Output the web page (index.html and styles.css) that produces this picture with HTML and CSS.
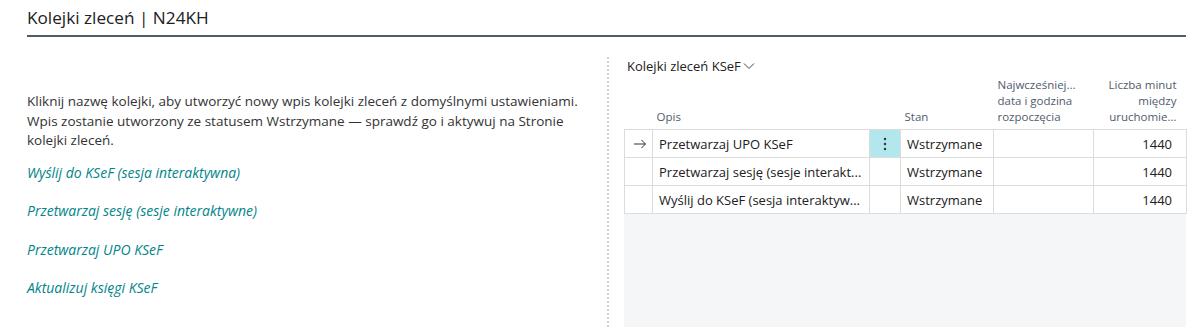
FILE: index.html
```html
<!DOCTYPE html>
<html>
<head>
  <meta charset="UTF-8" />
  <title>Kolejki zleceń | N24KH</title>
  <link rel="stylesheet" href="styles.css">
</head>
<body>
  <div class="header">
    <h1 class="page-title">Kolejki zleceń | N24KH</h1>
  </div>
  <div class="content">
    <div class="left-pane">
      <p class="intro">Kliknij nazwę kolejki, aby utworzyć nowy wpis kolejki zleceń z domyślnymi ustawieniami. Wpis zostanie utworzony ze statusem Wstrzymane — sprawdź go i aktywuj na Stronie kolejki zleceń.</p>
      <ul class="queue-links">
        <li><a href="#">Wyślij do KSeF (sesja interaktywna)</a></li>
        <li><a href="#">Przetwarzaj sesję (sesje interaktywne)</a></li>
        <li><a href="#">Przetwarzaj UPO KSeF</a></li>
        <li><a href="#">Aktualizuj księgi KSeF</a></li>
      </ul>
    </div>
    <div class="divider"></div>
    <div class="right-pane">
      <div class="part-title">Kolejki zleceń KSeF<svg class="chevron" width="12" height="8" viewBox="0 0 12 8"><path d="M1 1.5 L6 6.5 L11 1.5" fill="none" stroke="#444" stroke-width="1"/></svg></div>
      <div class="grid-wrap">
        <table class="grid">
          <colgroup>
            <col style="width:28px">
            <col style="width:217px">
            <col style="width:31px">
            <col style="width:93px">
            <col style="width:100px">
            <col style="width:93px">
          </colgroup>
          <thead>
            <tr>
              <th></th>
              <th>Opis</th>
              <th></th>
              <th>Stan</th>
              <th>Najwcześniej...<br>data i godzina<br>rozpoczęcia</th>
              <th class="num">Liczba minut<br>między<br>uruchomie...</th>
            </tr>
          </thead>
          <tbody>
            <tr>
              <td class="marker">
                <svg width="14" height="10" viewBox="0 0 14 10"><path d="M1 5 H12.5 M8.5 1 L12.5 5 L8.5 9" fill="none" stroke="#333" stroke-width="1"/></svg>
              </td>
              <td>Przetwarzaj UPO KSeF</td>
              <td class="dots active">
                <svg width="4" height="14" viewBox="0 0 4 14"><circle cx="2" cy="2" r="1.2" fill="#333"/><circle cx="2" cy="7" r="1.2" fill="#333"/><circle cx="2" cy="12" r="1.2" fill="#333"/></svg>
              </td>
              <td>Wstrzymane</td>
              <td></td>
              <td class="num">1440</td>
            </tr>
            <tr>
              <td class="marker"></td>
              <td>Przetwarzaj sesję (sesje interakt...</td>
              <td class="dots"></td>
              <td>Wstrzymane</td>
              <td></td>
              <td class="num">1440</td>
            </tr>
            <tr>
              <td class="marker"></td>
              <td>Wyślij do KSeF (sesja interaktyw...</td>
              <td class="dots"></td>
              <td>Wstrzymane</td>
              <td></td>
              <td class="num">1440</td>
            </tr>
          </tbody>
        </table>
      </div>
    </div>
  </div>
</body>
</html>
```

FILE: styles.css
```css
body {
  margin: 0;
  font-family: "Open Sans", "Noto Sans", Arial, sans-serif;
  color: #212121;
  background: #fff;
}
.header {
  margin-left: 27px;
  margin-right: 3px;
  border-bottom: 2px solid #505c6d;
  height: 35px;
}
.page-title {
  margin: 0;
  padding-top: 7px;
  font-size: 17.2px;
  font-weight: 400;
  color: #212121;
  line-height: 22px;
}
.content {
  display: flex;
  height: 290px;
}
.left-pane {
  width: 580px;
  padding-left: 27px;
  padding-top: 55px;
}
.intro {
  margin: 0;
  max-width: 560px;
  font-size: 13.5px;
  line-height: 19.5px;
  color: #333;
}
.queue-links {
  list-style: none;
  margin: 12px 0 0;
  padding: 0;
}
.queue-links li {
  height: 38.5px;
  line-height: 20px;
  font-size: 14px;
}
.queue-links a {
  color: #00858a;
  font-style: italic;
  text-decoration: none;
}
.divider {
  width: 0;
  margin-top: 20px;
  height: 270px;
  border-left: 2px dotted #d0d0d0;
}
.right-pane {
  margin-left: 15px;
  padding-top: 20px;
  width: 562px;
}
.part-title {
  font-size: 13px;
  line-height: 18px;
  color: #212121;
  padding-left: 3px;
}
.chevron {
  margin-left: 2px;
  vertical-align: 1px;
}
.grid-wrap {
  margin-top: 2px;
  background: #f5f6f8;
  height: 252px;
}
.grid {
  border-collapse: collapse;
  table-layout: fixed;
  width: 562px;
  font-size: 13px;
  background: #fff;
}
.grid th {
  font-weight: 400;
  font-size: 11.5px;
  color: #505c6d;
  text-align: left;
  vertical-align: bottom;
  line-height: 16px;
  padding: 0 4px 4px;
  height: 48px;
  white-space: nowrap;
  overflow: hidden;
}
.grid td {
  border: 1px solid #dcdcdc;
  height: 27px;
  padding: 0 6px;
  white-space: nowrap;
  overflow: hidden;
}
.grid .num {
  text-align: right;
  padding-right: 14px;
}
.grid th.num {
  padding-right: 10px;
}
.grid td.marker {
  padding: 0 0 0 8px;
  line-height: 0;
}
.grid td.dots {
  text-align: center;
  padding: 0;
  line-height: 0;
}
.grid td.dots.active {
  background: #b3e7ee;
}
```
